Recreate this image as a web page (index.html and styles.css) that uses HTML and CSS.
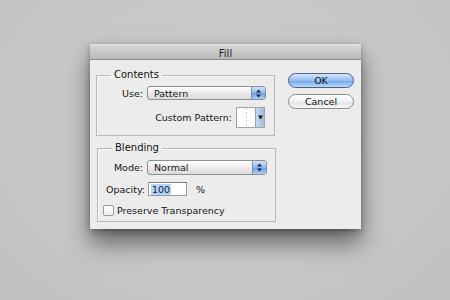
FILE: index.html
```html
<!DOCTYPE html>
<html lang="en">
<head>
    <meta charset="UTF-8">
    <title>Fill</title>
    <link rel="stylesheet" href="styles.css">
</head>
<body>
    <div class="dialog">
        <div class="title-bar">Fill</div>
        <div class="dialog-body">
            <div class="groups">
                <fieldset class="group contents">
                    <legend>Contents</legend>
                    <div class="row right">
                        <span class="label">Use:</span>
                        <div class="popup">
                            <span class="popup-text">Pattern</span>
                            <span class="stepper">
                                <svg width="7" height="9" viewBox="0 0 7 9"><path d="M3.5 0.5 L6 3.5 L1 3.5 Z M1 5.5 L6 5.5 L3.5 8.5 Z" fill="#1c2a45"/></svg>
                            </span>
                        </div>
                    </div>
                    <div class="row right pattern-row">
                        <span class="label">Custom Pattern:</span>
                        <div class="pattern-pick">
                            <span class="swatch"></span>
                            <span class="pick-arrow">
                                <svg width="5" height="5" viewBox="0 0 5 5"><path d="M0 0.5 L5 0.5 L2.5 4.5 Z" fill="#111"/></svg>
                            </span>
                        </div>
                    </div>
                </fieldset>

                <fieldset class="group blending">
                    <legend>Blending</legend>
                    <div class="row">
                        <span class="label col">Mode:</span>
                        <div class="popup">
                            <span class="popup-text">Normal</span>
                            <span class="stepper">
                                <svg width="7" height="9" viewBox="0 0 7 9"><path d="M3.5 0.5 L6 3.5 L1 3.5 Z M1 5.5 L6 5.5 L3.5 8.5 Z" fill="#1c2a45"/></svg>
                            </span>
                        </div>
                    </div>
                    <div class="row opacity-row">
                        <span class="label col">Opacity:</span>
                        <div class="field"><span class="selected">100</span></div>
                        <span class="unit">%</span>
                    </div>
                    <div class="row check-row">
                        <span class="checkbox"></span>
                        <span class="label">Preserve Transparency</span>
                    </div>
                </fieldset>
            </div>

            <div class="buttons">
                <button class="btn default">OK</button>
                <button class="btn">Cancel</button>
            </div>
        </div>
    </div>
</body>
</html>
```

FILE: styles.css
```css
html, body {
    margin: 0;
    height: 100%;
}
body {
    background: radial-gradient(ellipse at 50% 40%, #cbcbcb 0%, #c7c7c7 60%, #c0c0c0 100%);
    font-family: "DejaVu Sans", "Lucida Grande", sans-serif;
    font-size: 9.5px;
    color: #141414;
    padding: 44px 0 0 90px;
    box-sizing: border-box;
    overflow: hidden;
}
.dialog {
    width: 271px;
    height: 185px;
    background: #ececec;
    box-shadow: 0 14px 22px rgba(0, 0, 0, 0.5), 0 2px 6px rgba(0, 0, 0, 0.3);
    display: flex;
    flex-direction: column;
}
.title-bar {
    height: 16px;
    line-height: 17px;
    text-align: center;
    font-size: 10px;
    color: #262626;
    background: linear-gradient(#d7d7d7, #b8b8b8);
    border-top: 1px solid #e4e4e4;
    border-bottom: 1px solid #8d8d8d;
    box-sizing: border-box;
}
.dialog-body {
    flex: 1;
    display: flex;
    padding: 9px 0 0 6px;
    gap: 12px;
}
.groups {
    display: flex;
    flex-direction: column;
    gap: 6px;
}
.group {
    width: 179px;
    box-sizing: border-box;
    margin: 0;
    border: 1px solid #b9b9b9;
    box-shadow: inset 1px 1px 0 #f8f8f8;
    padding: 0 8px 0 8px;
}
.group legend {
    line-height: 12px;
    padding: 0 3px;
    margin-left: 6px;
    font-size: 10px;
    color: #111;
}
.contents {
    padding-top: 5px;
    padding-bottom: 7px;
}
.blending {
    margin-left: 1px;
    width: 178px;
    padding-top: 6px;
    padding-bottom: 5px;
}
.row {
    display: flex;
    align-items: center;
    gap: 4px;
}
.row.right {
    justify-content: flex-end;
}
.label {
    white-space: nowrap;
}
.label.col {
    width: 37px;
    text-align: right;
}
.pattern-row {
    margin-top: 7px;
    margin-right: 1px;
}
.popup {
    width: 119px;
    height: 14px;
    box-sizing: border-box;
    border: 1px solid #8f8f8f;
    border-radius: 3px;
    background: linear-gradient(#ffffff, #e9e9e9 55%, #dcdcdc);
    display: flex;
    align-items: center;
    overflow: hidden;
}
.popup-text {
    flex: 1;
    padding-left: 6px;
}
.stepper {
    width: 13px;
    height: 100%;
    display: flex;
    align-items: center;
    justify-content: center;
    background: linear-gradient(#cfe3fb, #8fb8ee 50%, #6aa0e6 51%, #a9cdf6);
    border-left: 1px solid #7a8fb0;
}
.pattern-pick {
    width: 29px;
    height: 21px;
    box-sizing: border-box;
    border: 1px solid #a3a3a3;
    display: flex;
    background: #fff;
}
.swatch {
    flex: 1;
    background: repeating-linear-gradient(#cfcfcf 0 2px, transparent 2px 4px) no-repeat center / 1px 100%;
}
.pick-arrow {
    width: 8px;
    display: flex;
    align-items: center;
    justify-content: center;
    background: linear-gradient(90deg, #c7d9ef, #9ebde3);
    border-left: 1px solid #8ea3c2;
}
.blending .popup {
    width: 120px;
    height: 15px;
}
.opacity-row {
    margin-top: 7px;
}
.field {
    width: 39px;
    height: 14px;
    box-sizing: border-box;
    border: 1px solid #9c9c9c;
    border-top-color: #7d7d7d;
    background: #fff;
    margin-left: 1px;
    padding-left: 2px;
    display: flex;
    align-items: center;
}
.selected {
    background: #b5d3f5;
    color: #10204a;
    padding: 0 1px;
}
.unit {
    margin-left: 5px;
}
.check-row {
    margin-top: 9px;
    margin-left: -3px;
    gap: 3px;
}
.checkbox {
    width: 11px;
    height: 11px;
    box-sizing: border-box;
    border: 1px solid #9a9a9a;
    border-radius: 2px;
    background: linear-gradient(#ffffff, #eeeeee);
}
.buttons {
    display: flex;
    flex-direction: column;
    gap: 6px;
    padding-top: 4px;
}
.btn {
    width: 66px;
    height: 15px;
    padding: 0;
    border-radius: 8px;
    border: 1px solid #8c8c8c;
    background: linear-gradient(#ffffff, #f1f1f1 50%, #e2e2e2 51%, #f7f7f7);
    font-family: "DejaVu Sans", "Lucida Grande", sans-serif;
    font-size: 9.5px;
    color: #111;
    line-height: 13px;
}
.btn.default {
    border-color: #4e5f8a;
    background: linear-gradient(#d5e6fb, #95bdf0 50%, #6ea5ea 51%, #b7d8fb);
}
```
